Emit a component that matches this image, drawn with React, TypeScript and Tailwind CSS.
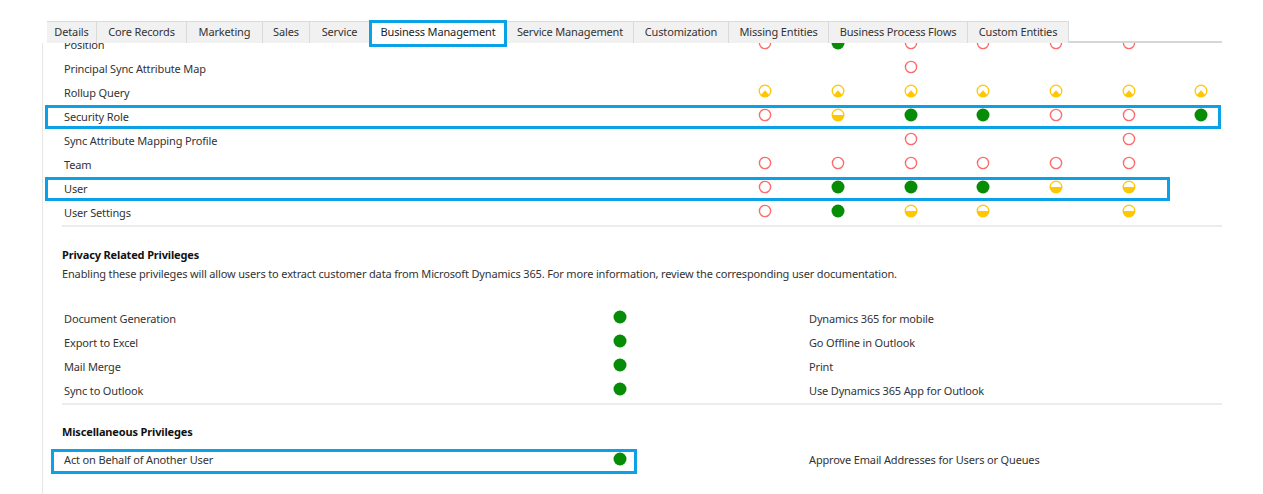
import React from 'react';

type Lvl = 'n' | 'f' | 'h' | 'q' | '';

const tabs = [
  { label: 'Details', w: 'w-[50px]' },
  { label: 'Core Records', w: 'w-[90px]' },
  { label: 'Marketing', w: 'w-[76px]' },
  { label: 'Sales', w: 'w-[47px]' },
  { label: 'Service', w: 'w-[60px]' },
  { label: 'Business Management', w: 'w-[137px]', active: true },
  { label: 'Service Management', w: 'w-[127px]' },
  { label: 'Customization', w: 'w-[95px]' },
  { label: 'Missing Entities', w: 'w-[100px]' },
  { label: 'Business Process Flows', w: 'w-[139px]' },
  { label: 'Custom Entities', w: 'w-[101px]' },
];

const rows: { name: string; levels: Lvl[]; box?: string }[] = [
  { name: 'Position', levels: ['n', 'f', 'n', 'n', 'n', 'n', ''] },
  { name: 'Principal Sync Attribute Map', levels: ['', '', 'n', '', '', '', ''] },
  { name: 'Rollup Query', levels: ['q', 'q', 'q', 'q', 'q', 'q', 'q'] },
  { name: 'Security Role', levels: ['n', 'h', 'f', 'f', 'n', 'n', 'f'], box: 'w-[1176px]' },
  { name: 'Sync Attribute Mapping Profile', levels: ['', '', 'n', '', '', 'n', ''] },
  { name: 'Team', levels: ['n', 'n', 'n', 'n', 'n', 'n', ''] },
  { name: 'User', levels: ['n', 'f', 'f', 'f', 'h', 'h', ''], box: 'w-[1125px]' },
  { name: 'User Settings', levels: ['n', 'f', 'h', 'h', '', 'h', ''] },
];

const privacy = [
  ['Document Generation', 'Dynamics 365 for mobile'],
  ['Export to Excel', 'Go Offline in Outlook'],
  ['Mail Merge', 'Print'],
  ['Sync to Outlook', 'Use Dynamics 365 App for Outlook'],
];

function Dot({ l }: { l: Lvl }) {
  if (!l) return null;
  return (
    <svg width="14" height="14" viewBox="0 0 14 14">
      {l === 'n' && <circle cx="7" cy="7" r="5.6" fill="none" stroke="#ff6b6b" strokeWidth="1.4" />}
      {l === 'f' && <circle cx="7" cy="7" r="6.5" fill="#078c07" />}
      {l === 'h' && (
        <>
          <path d="M0.9 7 A6.1 6.1 0 0 0 13.1 7 Z" fill="#ffc700" />
          <circle cx="7" cy="7" r="5.8" fill="none" stroke="#ffc700" strokeWidth="1.3" />
        </>
      )}
      {l === 'q' && (
        <>
          <path d="M7 6.3 L11.4 11.2 A6 6 0 0 1 2.6 11.2 Z" fill="#ffc700" />
          <circle cx="7" cy="7" r="5.8" fill="none" stroke="#ffc700" strokeWidth="1.3" />
        </>
      )}
    </svg>
  );
}

export default function App() {
  return (
    <div className="w-[1263px] h-[494px] overflow-hidden bg-white font-['Noto_Sans',sans-serif] text-[11px] tracking-[-0.15px] text-[#333333]">
      {/* Tabs */}
      <div className="h-[21px]" />
      <div className="relative z-10 flex h-[22px] bg-white pl-[47px]">
        {tabs.map((t) => (
          <div
            key={t.label}
            className={`relative flex items-center justify-center border-t border-r border-[#dadada] ${t.w} ${
              t.active ? 'bg-white text-[#222]' : 'bg-[#f1f1f1] text-[#333]'
            }`}
          >
            {t.label}
            {t.active && (
              <div className="absolute -left-px -top-[2px] h-[27px] w-[138px] border-[3px] border-[#0aa1e6]" />
            )}
          </div>
        ))}
        <div className="flex w-[153px] items-end">
          <div className="h-[2px] w-full bg-[#d6d6d6]" />
        </div>
      </div>

      {/* Content */}
      <div className="-mt-[10px] ml-[42px] border-l border-[#e6e6e6] pb-10">
        {rows.map((r) => (
          <div key={r.name} className="relative grid h-[24px] grid-cols-[686px_repeat(7,72.67px)] items-center">
            <div className="pl-[21px]">{r.name}</div>
            {r.levels.map((l, i) => (
              <div key={i} className="flex justify-center pb-[4px]">
                <Dot l={l} />
              </div>
            ))}
            {r.box && (
              <div className={`pointer-events-none absolute left-[2px] top-0 h-[24px] border-[3px] border-[#0aa1e6] ${r.box}`} />
            )}
          </div>
        ))}
        <div className="ml-[19px] h-[2px] w-[1160px] bg-[#ececec]" />

        {/* Privacy */}
        <div className="pl-[19px] pt-[20px]">
          <div className="font-bold text-[#111]">Privacy Related Privileges</div>
          <div className="mt-[2px]">
            Enabling these privileges will allow users to extract customer data from Microsoft Dynamics 365. For more
            information, review the corresponding user documentation.
          </div>
        </div>
        <div className="mt-[25px]">
          {privacy.map(([a, b]) => (
            <div key={a} className="flex h-[24px] items-center">
              <div className="w-[570px] pl-[21px]">{a}</div>
              <div className="flex w-[14px] justify-center pb-[4px]">
                <Dot l="f" />
              </div>
              <div className="pl-[182px]">{b}</div>
            </div>
          ))}
        </div>
        <div className="ml-[19px] h-[2px] w-[1160px] bg-[#ececec]" />

        {/* Misc */}
        <div className="pl-[19px] pt-[19px] font-bold text-[#111]">Miscellaneous Privileges</div>
        <div className="relative mt-[8px] flex h-[24px] items-center">
          <div className="w-[570px] pl-[21px]">Act on Behalf of Another User</div>
          <div className="flex w-[14px] justify-center pb-[4px]">
            <Dot l="f" />
          </div>
          <div className="pl-[182px]">Approve Email Addresses for Users or Queues</div>
          <div className="pointer-events-none absolute left-[8px] top-0 h-[25px] w-[586px] border-[3px] border-[#0aa1e6]" />
        </div>
      </div>
    </div>
  );
}
